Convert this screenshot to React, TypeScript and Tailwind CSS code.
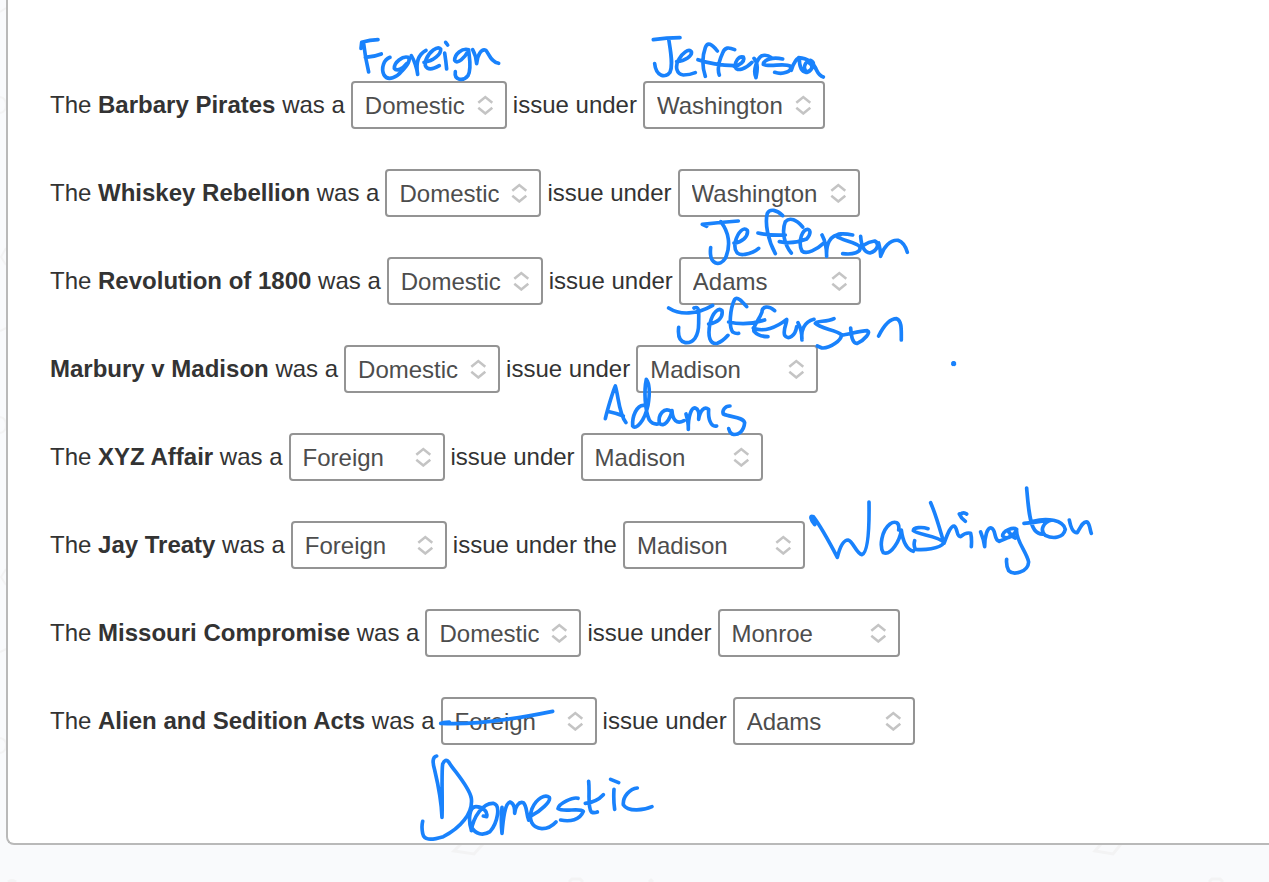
import React from "react";

type Question = {
  before: string;
  topic: string;
  kind: string;
  joiner: string;
  president: string;
};

const questions: Question[] = [
  { before: "The ", topic: "Barbary Pirates", kind: "Domestic", joiner: "issue under", president: "Washington" },
  { before: "The ", topic: "Whiskey Rebellion", kind: "Domestic", joiner: "issue under", president: "Washington" },
  { before: "The ", topic: "Revolution of 1800", kind: "Domestic", joiner: "issue under", president: "Adams" },
  { before: "", topic: "Marbury v Madison", kind: "Domestic", joiner: "issue under", president: "Madison" },
  { before: "The ", topic: "XYZ Affair", kind: "Foreign", joiner: "issue under", president: "Madison" },
  { before: "The ", topic: "Jay Treaty", kind: "Foreign", joiner: "issue under the", president: "Madison" },
  { before: "The ", topic: "Missouri Compromise", kind: "Domestic", joiner: "issue under", president: "Monroe" },
  { before: "The ", topic: "Alien and Sedition Acts", kind: "Foreign", joiner: "issue under", president: "Adams" },
];

const kinds = ["Domestic", "Foreign"];
const presidents = ["Washington", "Adams", "Jefferson", "Madison", "Monroe"];

// Freehand pen strokes, each group drawn at three times its size on the sheet.
const ink = [
  {
    label: "Foreign",
    at: "translate(340 25) scale(0.3333)",
    d: "M63 70 L65 52 Q90 45 114 44 M71 56 Q76 100 86 141 M76 97 Q102 96 124 87 M150 97 C132 104 122 128 132 150 C144 170 172 156 186 138 C202 120 214 104 204 97 C188 92 162 112 163 130 C170 140 188 132 200 116 M214 92 Q228 116 233 148 C228 120 232 90 258 76 M252 112 C280 108 304 88 302 72 C292 62 268 80 258 104 C250 128 264 142 298 122 M314 84 Q318 110 320 132 M317 52 L323 60 M386 74 C366 68 344 88 344 106 C352 120 374 98 386 76 C388 100 396 130 384 152 C370 170 342 166 346 140 M398 74 Q408 92 410 116 C412 90 424 70 438 76 C448 88 452 110 476 115",
  },
  {
    label: "Jefferson",
    at: "translate(630 25) scale(0.3333)",
    d: "M70 44 Q110 38 150 38 M116 42 C122 80 130 120 120 142 C108 160 78 156 74 116 M140 110 C165 108 188 92 184 80 C176 70 156 84 146 104 C134 126 140 148 160 150 Q180 150 196 143 M262 78 C245 56 232 50 226 68 C216 96 218 130 226 154 M204 104 Q250 120 314 122 M314 74 C296 66 284 66 278 84 C266 110 262 134 268 150 M312 124 C330 122 346 108 340 96 C326 92 314 110 316 126 C320 142 350 130 366 112 M372 100 C386 116 382 138 378 158 C368 136 380 102 396 92 Q412 88 424 98 M458 102 C430 96 402 102 400 118 C420 128 462 112 482 124 C486 140 458 150 434 142 M484 136 C490 112 504 96 508 100 C508 124 512 140 528 142 C552 134 556 112 542 106 C524 110 516 132 532 142 C548 136 550 120 538 114 M506 98 C536 100 552 116 560 136 Q568 152 580 156",
  },
  {
    label: "Jefferson",
    at: "translate(670 165) scale(0.3333)",
    d: "M110 184 L97 178 Q150 172 205 168 M152 170 C176 200 184 240 166 280 C150 306 116 300 122 248 M192 234 C215 232 236 215 232 196 C222 184 204 200 196 230 C190 262 205 272 225 268 Q250 264 266 250 M338 152 C320 134 300 130 292 145 C284 175 294 225 316 266 M264 204 Q300 212 346 210 M398 186 C380 165 360 155 346 170 C334 200 344 240 364 264 M328 230 Q370 238 410 222 C425 205 422 190 408 194 C390 205 386 240 396 258 C410 270 440 254 464 232 M456 210 Q470 236 470 274 C468 240 478 208 514 208 M548 210 C520 204 498 206 500 214 C512 226 562 232 570 246 C574 262 550 270 518 266 M572 214 C574 240 580 262 600 264 C622 258 630 236 614 228 Q596 230 582 240 M626 234 Q632 255 632 274 C640 248 660 224 684 226 C702 232 708 248 712 262",
  },
  {
    label: "Jefferson",
    at: "translate(630 290) scale(0.3333)",
    d: "M116 54 C150 76 200 74 248 46 M192 54 C210 46 206 70 206 100 C206 140 190 160 166 158 C146 154 144 130 146 112 M236 102 C262 98 280 84 276 62 C266 52 248 66 240 100 C232 140 240 164 262 160 Q278 154 294 136 M350 50 C336 34 322 18 314 28 C300 56 296 110 308 126 Q318 132 326 130 M296 96 Q350 108 404 90 M434 62 C416 46 396 48 396 66 C388 90 366 110 372 124 C384 138 400 140 414 140 M370 114 C400 128 440 112 470 88 C472 100 458 116 464 136 C474 152 496 138 500 110 M504 98 Q516 120 516 150 C512 122 522 96 552 88 M612 86 C590 98 560 90 556 100 C570 116 620 120 634 134 C636 150 600 176 576 174 L562 168 M662 114 C664 140 668 162 682 160 C704 150 724 126 712 122 C690 122 660 132 634 136 M746 138 C760 110 780 86 800 86 C816 92 814 120 814 150 M970 221 L972 221 M969 219 L973 223 M973 219 L969 223",
  },
  {
    label: "Adams",
    at: "translate(570 370) scale(0.3333)",
    d: "M106 146 C112 120 130 60 136 48 C146 80 146 130 168 158 M112 124 Q140 130 160 138 M222 106 C200 104 186 140 188 168 C198 182 224 152 234 106 C240 70 238 40 229 28 C222 60 224 120 238 150 Q248 164 264 162 M304 124 C282 110 264 134 268 160 C282 174 300 150 306 122 C308 150 320 164 342 152 M348 132 Q356 160 355 178 C354 140 364 112 376 114 C388 118 388 132 386 148 C390 120 404 108 416 118 C414 146 422 172 440 168 M480 108 C464 108 456 122 460 132 C480 142 520 140 524 158 C522 184 504 198 486 192 Q478 186 476 176",
  },
  {
    label: "Washington",
    at: "translate(800 480) scale(0.3333)",
    d: "M44 134 C32 120 28 104 40 110 C60 136 90 190 112 232 C120 200 130 180 144 180 C160 184 168 220 186 224 C206 216 208 130 207 66 M296 150 C300 126 284 122 270 132 C244 152 238 200 250 218 C274 228 300 180 304 150 C308 180 320 208 340 214 M384 146 C366 140 340 142 340 152 C350 164 420 168 432 188 C420 208 370 210 346 208 Q340 196 344 182 M392 68 C410 110 420 150 432 190 C440 170 450 138 462 138 C474 142 468 170 482 170 Q498 156 512 160 Q516 175 514 200 M480 104 Q490 94 500 102 M478 102 Q484 116 496 124 M542 156 Q552 180 554 200 C554 170 562 140 574 144 C590 150 580 180 598 184 M598 184 C620 176 646 164 650 148 C640 140 608 152 608 168 C622 182 648 164 650 148 M624 152 Q634 168 646 174 M650 148 C646 180 680 216 686 246 C684 278 640 286 626 272 Q618 256 620 238 M680 24 C684 70 688 130 704 150 Q715 164 732 162 M672 130 Q700 128 736 122 M700 124 C740 112 790 120 796 148 C790 174 760 178 736 166 C718 150 730 126 756 120 M808 120 C812 140 820 160 832 158 C842 140 850 122 862 126 C870 134 870 150 874 160",
  },
  {
    label: "Domestic",
    at: "translate(410 690) scale(0.3333)",
    d: "M92 100 Q150 102 205 98 Q300 90 428 64 M100 98 L118 96 M80 198 C66 200 68 220 74 240 C86 290 94 330 96 382 C98 330 94 250 98 222 Q106 204 116 216 C130 240 178 290 184 325 C190 370 150 415 100 440 C60 452 42 450 38 430 Q34 410 38 394 M184 420 C174 390 178 350 198 350 C220 350 234 366 230 380 L220 378 M184 422 C190 380 220 338 250 340 C274 346 262 400 240 425 C220 438 196 434 184 410 M276 352 Q272 390 276 430 C280 380 286 340 300 336 C314 342 314 356 314 370 C316 350 326 334 340 338 C352 350 348 370 356 390 M366 376 C390 364 424 334 418 322 C406 312 380 324 366 356 C354 390 366 414 396 416 Q420 416 438 396 M504 325 C490 320 446 340 444 356 C460 368 510 352 520 364 C510 390 480 396 452 390 M536 274 C540 310 532 350 544 366 Q552 370 562 366 M526 340 Q560 336 580 314 M612 298 Q610 330 614 358 M602 268 L626 278 M682 294 C660 296 638 320 640 344 C654 366 700 362 726 350",
  },
];

function Picker({
  label,
  options,
  value,
  width,
}: {
  label: string;
  options: string[];
  value: string;
  width: string;
}) {
  return (
    <span className={`relative inline-flex shrink-0 ${width}`}>
      <select
        aria-label={label}
        defaultValue={value}
        className="h-12 w-full appearance-none rounded border-2 border-[#949494] bg-white pl-3 pr-10 pt-0.5 text-2xl text-[#4d4d4d]"
      >
        {options.map((o) => (
          <option key={o}>{o}</option>
        ))}
      </select>
      <svg
        aria-hidden="true"
        viewBox="0 0 18 22"
        className="pointer-events-none absolute right-3 top-3 h-[22px] w-[18px] fill-none stroke-[#c4c4c4]"
        strokeWidth="2.5"
      >
        <path d="M1.300 9.800L8.300 4L15.300 9.800M1.300 14.700L8.300 20.500L15.300 14.700" />
      </svg>
    </span>
  );
}

export default function App() {
  return (
    <div className="relative min-h-screen overflow-hidden bg-[#f9fafc] pl-1.5 font-['Liberation_Sans',Arial,sans-serif] text-2xl text-[#333]">
      <svg
        aria-hidden="true"
        width="1269"
        height="882"
        className="pointer-events-none absolute left-0 top-0 fill-none stroke-[#f3f3f4] stroke-2"
      >
        <path d="M0 12L6 8M0 97Q6 98 6 105Q6 112 0 113M6 248L1 257L6 265M0 331L6 328M0 417Q6 418 6 425Q6 432 0 433M6 569L1 577L6 585M0 652L6 649M0 738Q6 739 6 745Q6 752 0 753" />
        <path
          className="stroke-3"
          d="M461 844L454 851L474 854L483 844M1101 844L1095 851L1113 854L1121 844M569 882L572 879H580L583 882M1209 882L1212 879H1220L1223 882M8 882Q12 879 16 882M649 882L651 880L653 882"
        />
      </svg>
      <main className="relative rounded-bl-lg border-b-2 border-l-2 border-[#b9b9b9] bg-white pb-[98px] pl-[42px] pt-[81px]">
        <form className="flex flex-col gap-10">
          {questions.map((q) => (
            <div key={q.topic} className="flex items-center gap-1.5 whitespace-pre">
              <span>
                {q.before}
                <strong className="font-bold">{q.topic}</strong> was a
              </span>
              <Picker label={`${q.topic}: type of issue`} options={kinds} value={q.kind} width="w-[156px]" />
              <span>{q.joiner}</span>
              <Picker label={`${q.topic}: president`} options={presidents} value={q.president} width="w-[182px]" />
            </div>
          ))}
        </form>
      </main>
      <svg
        width="1269"
        height="882"
        className="pointer-events-none absolute left-0 top-0 fill-none stroke-[#1982fc]"
        strokeWidth="11"
        strokeLinecap="round"
        strokeLinejoin="round"
      >
        {ink.map((word, i) => (
          <g key={i} transform={word.at} role="img" aria-label={word.label}>
            <path d={word.d} />
          </g>
        ))}
      </svg>
    </div>
  );
}
